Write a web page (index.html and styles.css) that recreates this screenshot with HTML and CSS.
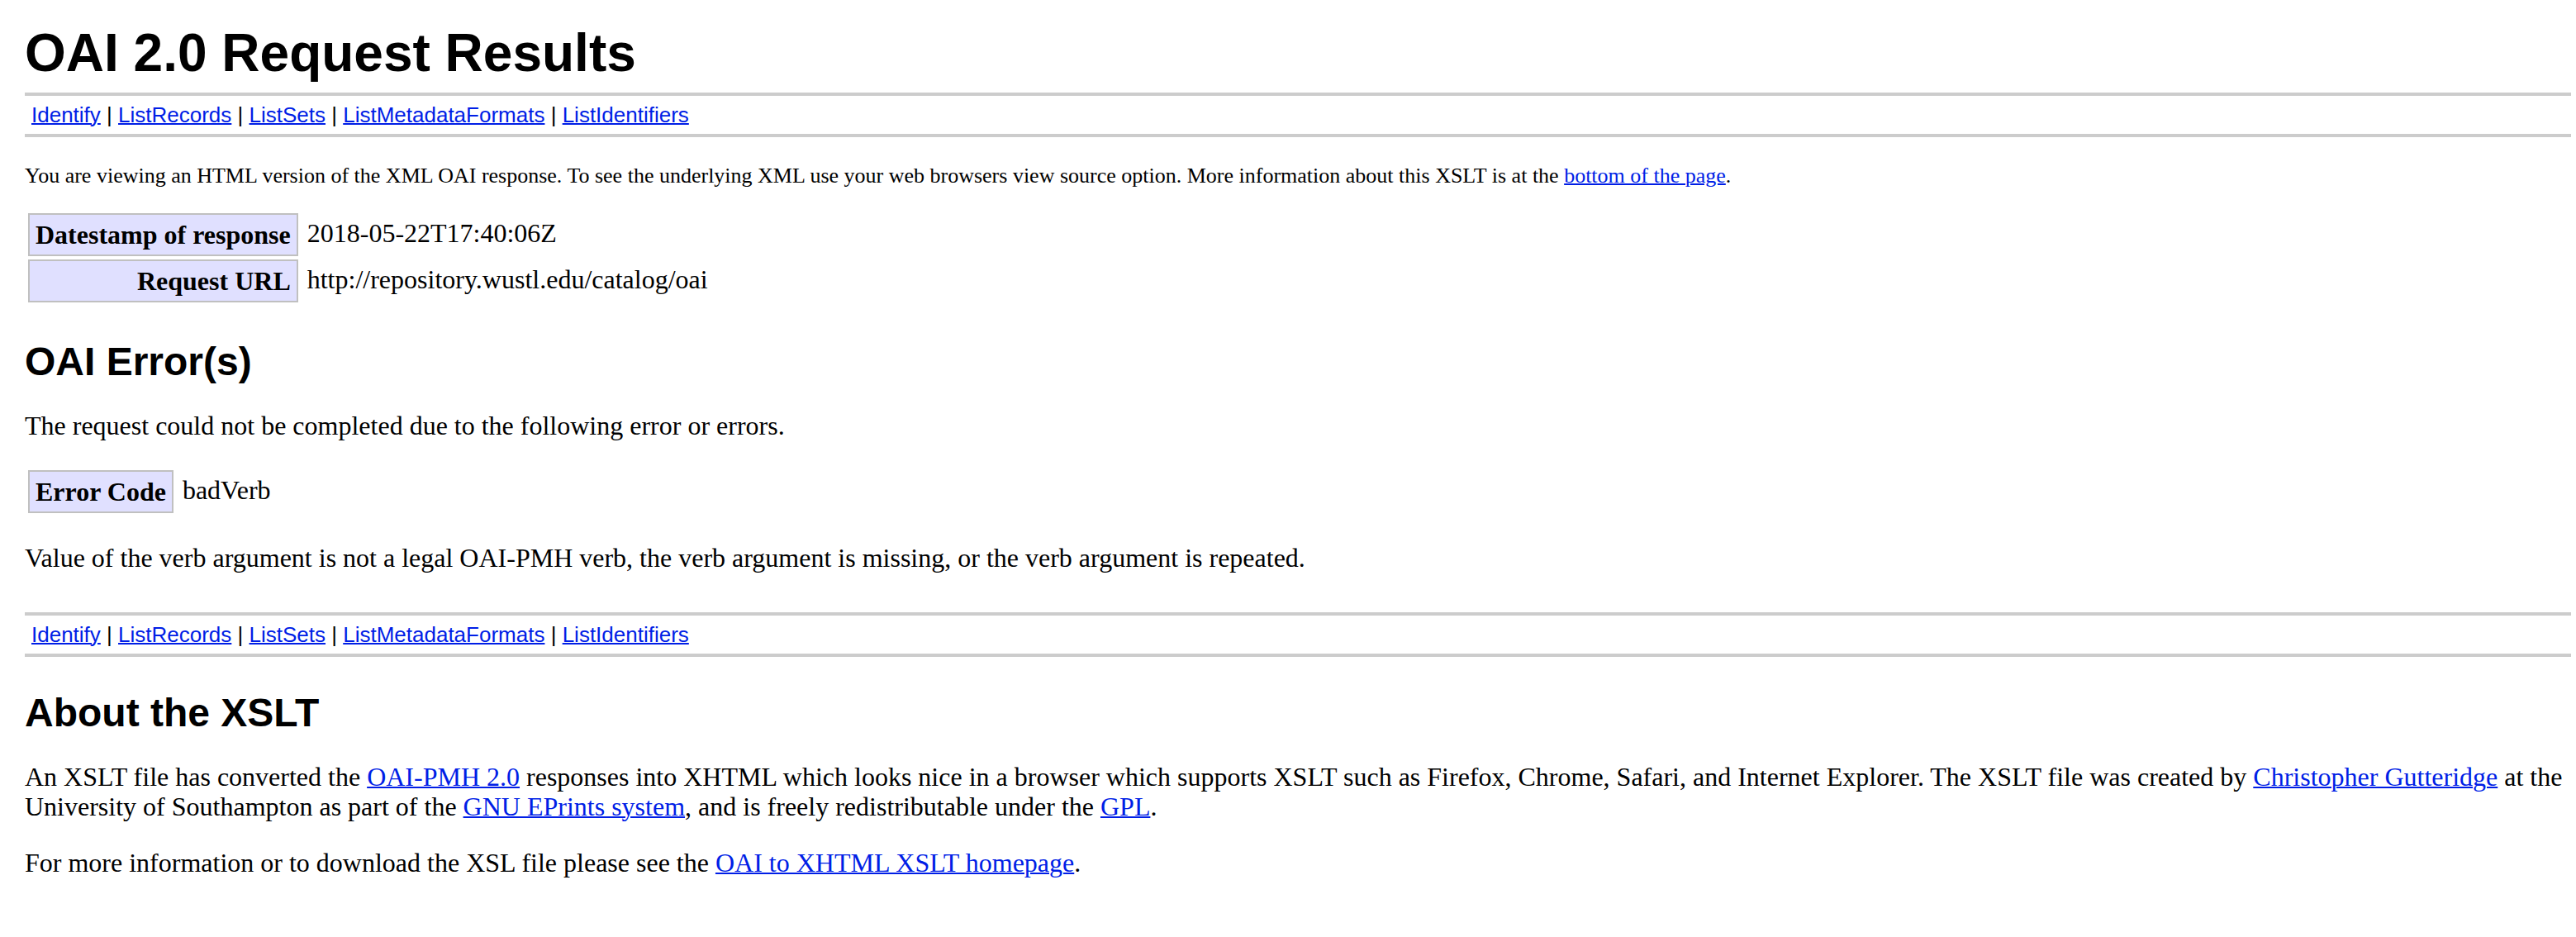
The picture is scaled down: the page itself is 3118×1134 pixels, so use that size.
FILE: index.html
```html
<!DOCTYPE html>
<html lang="en">
<head>
<meta charset="utf-8">
<title>OAI 2.0 Request Results</title>
<link rel="stylesheet" href="styles.css">
</head>
<body>
<h1>OAI 2.0 Request Results</h1>
<nav class="quicklinks"><a href="#identify">Identify</a> | <a href="#records">ListRecords</a> | <a href="#sets">ListSets</a> | <a href="#formats">ListMetadataFormats</a> | <a href="#identifiers">ListIdentifiers</a></nav>
<p class="intro">You are viewing an HTML version of the XML OAI response. To see the underlying XML use your web browsers view source option. More information about this XSLT is at the <a href="#moreinfo">bottom of the page</a>.</p>
<table class="values">
<tr><th scope="row">Datestamp of response</th><td>2018-05-22T17:40:06Z</td></tr>
<tr><th scope="row">Request URL</th><td>http://repository.wustl.edu/catalog/oai</td></tr>
</table>
<h2>OAI Error(s)</h2>
<p>The request could not be completed due to the following error or errors.</p>
<table class="values">
<tr><th scope="row">Error Code</th><td>badVerb</td></tr>
</table>
<p class="error">Value of the verb argument is not a legal OAI-PMH verb, the verb argument is missing, or the verb argument is repeated.</p>
<nav class="quicklinks"><a href="#identify">Identify</a> | <a href="#records">ListRecords</a> | <a href="#sets">ListSets</a> | <a href="#formats">ListMetadataFormats</a> | <a href="#identifiers">ListIdentifiers</a></nav>
<h2 id="moreinfo">About the XSLT</h2>
<p>An XSLT file has converted the <a href="#oai-pmh">OAI-PMH 2.0</a> responses into XHTML which looks nice in a browser which supports XSLT such as Firefox, Chrome, Safari, and Internet Explorer. The XSLT file was created by <a href="#author">Christopher Gutteridge</a> at the University of Southampton as part of the <a href="#eprints">GNU EPrints system</a>, and is freely redistributable under the <a href="#gpl">GPL</a>.</p>
<p>For more information or to download the XSL file please see the <a href="#homepage">OAI to XHTML XSLT homepage</a>.</p>
</body>
</html>
```
FILE: styles.css
```css
body {
  margin: 0;
  padding: 28px 6px 32px 30px;
  background: #fff;
  color: #000;
  font: 32px/36px "Liberation Serif", "Times New Roman", serif;
}

h1,
h2,
.quicklinks {
  font-family: "Liberation Sans", Arial, sans-serif;
}

h1 {
  margin: 0 0 12px;
  font-size: 64px;
  line-height: 72px;
}

h2 {
  margin: 40px 0 32px;
  font-size: 48px;
  line-height: 55px;
}

p {
  margin: 32px 0;
}

a {
  color: #001ee6;
  text-decoration-thickness: 2px;
}

.quicklinks {
  padding: 8px;
  border-top: 4px solid #ccc;
  border-bottom: 4px solid #ccc;
  font-size: 26px;
  line-height: 30px;
}

.intro {
  margin-bottom: 26px;
  font-size: 26px;
  line-height: 30px;
}

.values {
  border-spacing: 4px;
}

.values th,
.values td {
  padding: 6px 7px;
  vertical-align: top;
}

.values th {
  border: 2px solid #c0c0c0;
  background: #e0e0ff;
  text-align: right;
}

.error {
  margin-bottom: 48px;
}
```
